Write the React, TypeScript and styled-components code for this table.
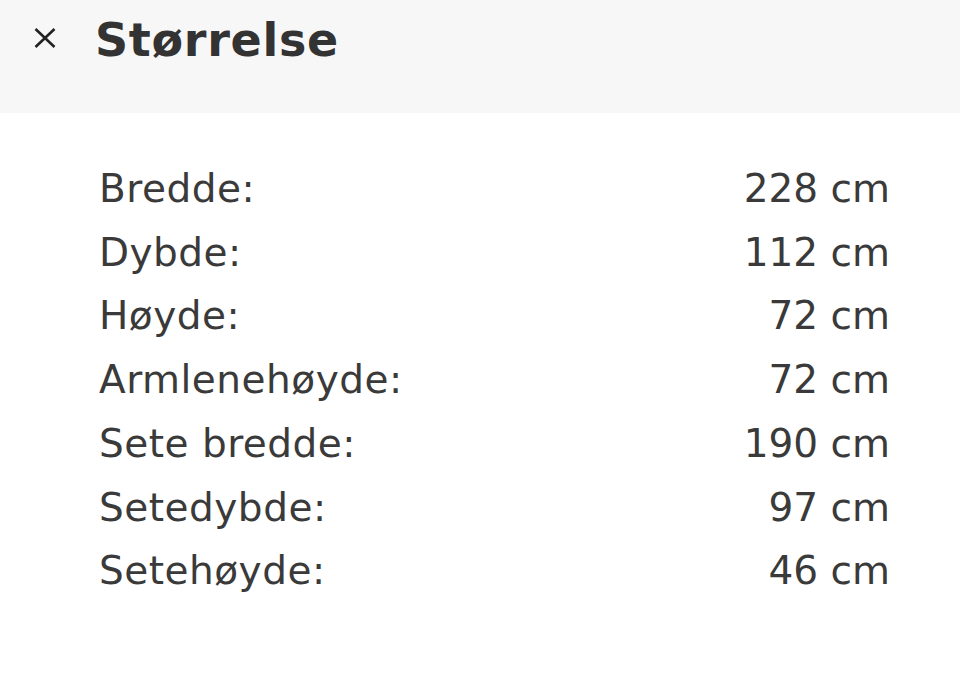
import styled, { createGlobalStyle } from "styled-components";

const GlobalStyle = createGlobalStyle`
  html, body {
    margin: 0;
    padding: 0;
    background: #ffffff;
  }
  body {
    font-family: "DejaVu Sans", Verdana, sans-serif;
    color: #333333;
  }
`;

const rows: [string, string][] = [
  ["Bredde:", "228 cm"],
  ["Dybde:", "112 cm"],
  ["Høyde:", "72 cm"],
  ["Armlenehøyde:", "72 cm"],
  ["Sete bredde:", "190 cm"],
  ["Setedybde:", "97 cm"],
  ["Setehøyde:", "46 cm"],
];

export default function App() {
  return (
    <>
      <GlobalStyle />
      <Page>
        <Header>
          <CloseButton aria-label="Lukk">
            <svg width="24" height="24" viewBox="0 0 24 24">
              <path d="M2.5 3 L21.5 21 M21.5 3 L2.5 21" stroke="#222" strokeWidth="2.6" fill="none" />
            </svg>
          </CloseButton>
          <Title>Størrelse</Title>
        </Header>
        <List>
          {rows.map(([label, value]) => (
            <Row key={label}>
              <Label>{label}</Label>
              <Value>{value}</Value>
            </Row>
          ))}
        </List>
      </Page>
    </>
  );
}

const Page = styled.div`
  width: 960px;
  min-height: 673px;
  background: #ffffff;
`;

const Header = styled.header`
  display: flex;
  align-items: flex-start;
  height: 113px;
  box-sizing: border-box;
  padding: 13px 0 0 33px;
  background: #f7f7f7;
`;

const CloseButton = styled.button`
  display: flex;
  align-items: center;
  justify-content: center;
  width: 24px;
  height: 24px;
  margin-top: 13px;
  padding: 0;
  border: none;
  background: none;
  cursor: pointer;
`;

const Title = styled.h1`
  margin: 0 0 0 38px;
  font-size: 46px;
  line-height: 54px;
  font-weight: 700;
  letter-spacing: 0.7px;
  color: #333333;
`;

const List = styled.div`
  display: flex;
  flex-direction: column;
  padding: 44px 70px 0 99px;
`;

const Row = styled.div`
  display: flex;
  justify-content: space-between;
  font-size: 39px;
  line-height: 63.7px;
  color: #3a3a3a;
`;

const Label = styled.span`
  letter-spacing: 0.5px;
`;

const Value = styled.span`
  text-align: right;
`;
